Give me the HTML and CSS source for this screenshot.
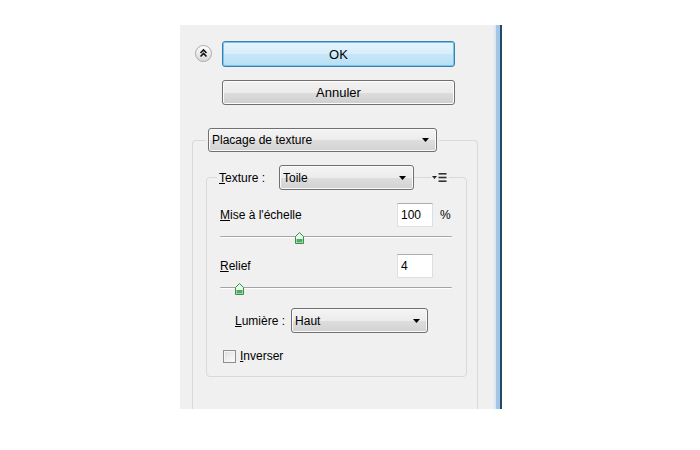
FILE: index.html
```html
<!DOCTYPE html>
<html lang="fr">
<head>
<meta charset="UTF-8">
<meta name="viewport" content="width=device-width, initial-scale=1.0">
<title>Placage de texture</title>
<link rel="stylesheet" href="styles.css">
</head>
<body>

<div class="window">
  <div class="panel">
    <div class="actions">
      <button class="collapse" aria-label="Réduire">
        <svg width="17" height="17" viewBox="0 0 17 17">
          <defs>
            <linearGradient id="cg" x1="0" y1="0" x2="0" y2="1">
              <stop offset="0" stop-color="#ffffff"/>
              <stop offset="1" stop-color="#d8d8d8"/>
            </linearGradient>
          </defs>
          <circle cx="8.5" cy="8.5" r="8" fill="url(#cg)" stroke="#a9a9a9"/>
          <path d="M5.5 8 L8.5 5 L11.5 8 M5.5 11.5 L8.5 8.5 L11.5 11.5" fill="none" stroke="#111" stroke-width="1.6"/>
        </svg>
      </button>
      <div class="buttons">
        <button class="btn btn-default">OK</button>
        <button class="btn">Annuler</button>
      </div>
    </div>

    <fieldset class="group">
      <legend class="group-legend">
        <div class="dropdown dropdown-wide">
          <span class="dropdown-text">Placage de texture</span>
          <svg class="arrow" width="7" height="4" viewBox="0 0 7 4"><path d="M0 0 H7 L3.5 4 Z" fill="#000"/></svg>
        </div>
      </legend>

      <fieldset class="subgroup">
        <legend class="subgroup-legend">
          <span class="legend-label"><u>T</u>exture :</span>
          <div class="dropdown dropdown-texture">
            <span class="dropdown-text">Toile</span>
            <svg class="arrow" width="7" height="4" viewBox="0 0 7 4"><path d="M0 0 H7 L3.5 4 Z" fill="#000"/></svg>
          </div>
          <span class="legend-line"></span>
          <svg class="menu-icon" width="16" height="11" viewBox="0 0 16 11">
            <path d="M1 4 H6 L3.5 7 Z" fill="#222"/>
            <rect x="7.5" y="1" width="8" height="1.6" fill="#333"/>
            <rect x="7.5" y="4.7" width="8" height="1.6" fill="#333"/>
            <rect x="7.5" y="8.4" width="8" height="1.6" fill="#333"/>
          </svg>
        </legend>

        <div class="field-row">
          <span class="field-label"><u>M</u>ise à l'échelle</span>
          <input class="field-input" type="text" value="100">
          <span class="unit">%</span>
        </div>
        <div class="slider">
          <div class="slider-track"></div>
          <svg class="slider-thumb" style="left: 34%" width="9" height="12" viewBox="0 0 9 12">
            <path d="M4.5 0.5 L8.5 4.5 V11.5 H0.5 V4.5 Z" fill="#e8f5ea" stroke="#3d8c4a"/>
            <path d="M1.5 7 H7.5 V10.5 H1.5 Z" fill="#4caf5c"/>
          </svg>
        </div>

        <div class="field-row field-row-second">
          <span class="field-label"><u>R</u>elief</span>
          <input class="field-input" type="text" value="4">
          <span class="unit"></span>
        </div>
        <div class="slider">
          <div class="slider-track"></div>
          <svg class="slider-thumb" style="left: 8%" width="9" height="12" viewBox="0 0 9 12">
            <path d="M4.5 0.5 L8.5 4.5 V11.5 H0.5 V4.5 Z" fill="#e8f5ea" stroke="#3d8c4a"/>
            <path d="M1.5 7 H7.5 V10.5 H1.5 Z" fill="#4caf5c"/>
          </svg>
        </div>

        <div class="light-row">
          <span class="light-label"><u>L</u>umière :</span>
          <div class="dropdown dropdown-light">
            <span class="dropdown-text">Haut</span>
            <svg class="arrow" width="7" height="4" viewBox="0 0 7 4"><path d="M0 0 H7 L3.5 4 Z" fill="#000"/></svg>
          </div>
        </div>

        <label class="check-row">
          <span class="checkbox"></span>
          <span><u>I</u>nverser</span>
        </label>
      </fieldset>
    </fieldset>
  </div>
  <div class="edge"></div>
</div>

</body>
</html>
```

FILE: styles.css
```css
body {
  margin: 0;
  background: #ffffff;
  font-family: "Liberation Sans", Arial, sans-serif;
  font-size: 12px;
  color: #000;
}
.window {
  display: flex;
  margin: 25px 0 0 180px;
  width: 322px;
  height: 384px;
}
.panel {
  width: 314px;
  background: #f0f0f0;
  overflow: hidden;
}
.edge {
  width: 8px;
  background: linear-gradient(to right, #dbe7f2 0 2px, #a3c6e6 2px 6px, #1f4a68 6px 8px);
}

/* top buttons */
.actions {
  display: flex;
  padding: 16px 0 0 15px;
}
.collapse {
  width: 17px;
  height: 17px;
  margin: 4px 10px 0 0;
  padding: 0;
  border: none;
  background: none;
  display: block;
}
.collapse svg {
  display: block;
}
.buttons {
  display: flex;
  flex-direction: column;
  gap: 13px;
  width: 233px;
}
.btn {
  height: 25px;
  font-family: inherit;
  font-size: 13px;
  color: #000;
  border: 1px solid #707070;
  border-radius: 3px;
  background: linear-gradient(#f2f2f2, #ebebeb 50%, #dddddd 50%, #cfcfcf);
  box-shadow: inset 0 0 0 1px #fcfcfc;
  padding: 0;
}
.btn-default {
  height: 26px;
  border-color: #3c7fb1;
  background: linear-gradient(#e6f4fc, #d7eefa 50%, #c7e7f8 50%, #b8dff5);
  box-shadow: inset 0 0 0 1px #74c6ea;
}

/* group boxes */
.group {
  margin: 23px 0 0 12px;
  width: 286px;
  box-sizing: border-box;
  padding: 13px 10px 40px 13px;
  border: 1px solid #d9d9d9;
  border-bottom: none;
  border-radius: 4px 4px 0 0;
  min-inline-size: 0;
}
.group-legend {
  padding: 0 2px;
  margin: 0;
}
.subgroup {
  margin: 0;
  width: 261px;
  box-sizing: border-box;
  padding: 13px 14px 12px 13px;
  border: 1px solid #d9d9d9;
  border-radius: 4px;
  min-inline-size: 0;
}
.subgroup-legend {
  display: flex;
  align-items: center;
  padding: 0 2px;
  margin-left: -3px;
}
.legend-label {
  width: 60px;
}
.legend-line {
  width: 17px;
  height: 1px;
  background: #d9d9d9;
}
.menu-icon {
  display: block;
}

/* dropdowns */
.dropdown {
  display: flex;
  align-items: center;
  box-sizing: border-box;
  height: 25px;
  border: 1px solid #707070;
  border-radius: 3px;
  background: linear-gradient(#f4f4f4, #ececec 50%, #dedede 50%, #d2d2d2);
  box-shadow: inset 0 0 0 1px #fafafa;
}
.dropdown-text {
  flex: 1;
  padding-left: 3px;
}
.arrow {
  margin-right: 7px;
}
.dropdown-wide {
  width: 229px;
  height: 24px;
}
.dropdown-texture {
  width: 135px;
}
.dropdown-light {
  width: 137px;
}

/* fields */
.field-row {
  display: flex;
  align-items: center;
  height: 24px;
}
.field-row-second {
  margin-top: 10px;
}
.field-label {
  flex: 1;
}
.field-input {
  width: 36px;
  height: 24px;
  box-sizing: border-box;
  border: 1px solid #dbdfe6;
  border-top-color: #abadb3;
  background: #fff;
  font-family: inherit;
  font-size: 12px;
  padding: 0 0 0 3px;
  margin: 0;
  color: #000;
}
.unit {
  width: 19px;
  padding-left: 7px;
  box-sizing: border-box;
}
.slider {
  position: relative;
  height: 14px;
  margin-top: 3px;
  display: flex;
  align-items: center;
}
.slider-track {
  flex: 1;
  height: 1px;
  background: #a4a4a4;
  border-bottom: 1px solid #ffffff;
  border-radius: 1px;
}
.slider-thumb {
  position: absolute;
  top: 2px;
  margin-left: -4px;
}
.light-row {
  display: flex;
  align-items: center;
  margin-top: 13px;
  padding-left: 15px;
}
.light-label {
  margin-right: 6px;
}
.check-row {
  display: flex;
  align-items: center;
  height: 16px;
  margin-top: 15px;
  padding-left: 3px;
  gap: 4px;
}
.checkbox {
  width: 13px;
  height: 13px;
  box-sizing: border-box;
  border: 1px solid #8f8f8f;
  background: linear-gradient(135deg, #dcdcdc, #ffffff);
  box-shadow: inset 0 0 0 1px #f4f4f4;
}
```
